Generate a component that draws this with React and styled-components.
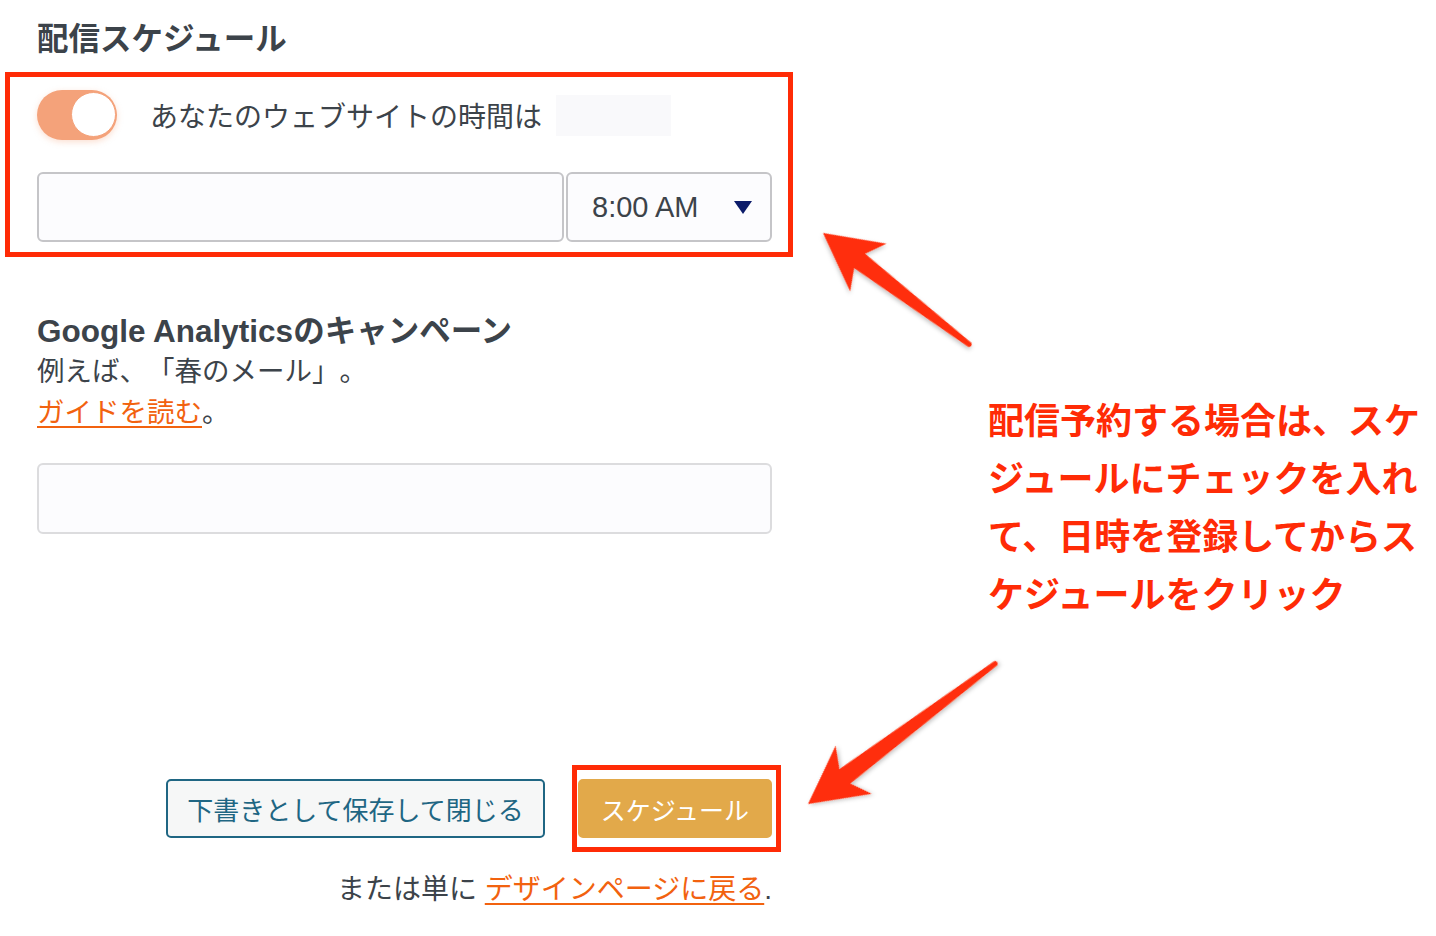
import React from "react";
import styled, { createGlobalStyle } from "styled-components";

const GlobalStyle = createGlobalStyle`
  body {
    margin: 0;
    background: #fff;
    font-family: "Liberation Sans", "Noto Sans CJK JP", sans-serif;
    color: #3c434a;
    text-spacing-trim: space-all;
  }
`;

const Page = styled.div`
  position: relative;
  width: 1436px;
  height: 936px;
  display: flex;
  overflow: hidden;
`;

const FormColumn = styled.div`
  width: 735px;
  margin-left: 37px;
  padding-top: 19px;
  display: flex;
  flex-direction: column;
`;

const SectionTitle = styled.h2`
  margin: 0;
  font-size: 31.5px;
  line-height: 40px;
  font-weight: 700;
  color: #3c434a;
  white-space: nowrap;
`;

const Highlight = styled.div`
  border: 5px solid #ff2b06;
  margin: ${(p) => p.$margin};
  padding: ${(p) => p.$padding};
`;

const ToggleRow = styled.div`
  display: flex;
  align-items: center;
  height: 50px;
`;

const Toggle = styled.span`
  position: relative;
  width: 80px;
  height: 50px;
  border-radius: 25px;
  background: #f4a27a;
  box-shadow: 0 2px 6px rgba(244, 162, 122, 0.35);
  flex-shrink: 0;

  &::after {
    content: "";
    position: absolute;
    right: 1px;
    top: 2px;
    width: 43px;
    height: 43px;
    border-radius: 50%;
    background: #fff;
    border: 1.5px solid #f4a27a;
  }
`;

const ToggleLabel = styled.span`
  margin-left: 33px;
  font-size: 28px;
  color: #3c434a;
  white-space: nowrap;
`;

const FaintBox = styled.span`
  width: 115px;
  height: 41px;
  margin-left: 14px;
  background: #f9f9fb;
`;

const DateRow = styled.div`
  display: flex;
  gap: 2px;
  margin-top: 32px;
`;

const Field = styled.div`
  box-sizing: border-box;
  height: ${(p) => p.$h || 70}px;
  flex: ${(p) => p.$flex || "1"};
  width: ${(p) => (p.$w ? p.$w + "px" : "auto")};
  border: 2px solid ${(p) => p.$border || "#c5c5c8"};
  border-radius: 6px;
  background: #fcfcfe;
  display: flex;
  align-items: center;
  justify-content: space-between;
  padding: 0 18px 0 24px;
  margin-top: ${(p) => p.$mt || 0}px;
`;

const SelectText = styled.span`
  font-size: 29px;
  color: #3c434a;
`;

const Caret = styled.span`
  width: 0;
  height: 0;
  border-left: 9px solid transparent;
  border-right: 9px solid transparent;
  border-top: 13px solid #0b1b6a;
`;

const Heading = styled.h3`
  margin: 54px 0 0;
  font-size: 31.5px;
  line-height: 40px;
  font-weight: 700;
  color: #3c434a;
  white-space: nowrap;
`;

const Desc = styled.p`
  margin: 0;
  font-size: 27.5px;
  line-height: 41px;
  color: #3c434a;
  white-space: nowrap;
`;

const Link = styled.a`
  color: #f2620f;
  text-decoration: underline;
  text-decoration-thickness: 2px;
  text-underline-offset: 4px;
`;

const ButtonRow = styled.div`
  display: flex;
  align-items: center;
  justify-content: flex-end;
  margin-top: 231px;
  margin-right: -9px;
  gap: 27px;
`;

const Button = styled.button`
  box-sizing: border-box;
  height: 59px;
  padding: 0 ${(p) => (p.$primary ? 21 : 19)}px;
  border-radius: 5px;
  font-family: "Liberation Sans", "Noto Sans CJK JP", sans-serif;
  font-size: ${(p) => (p.$primary ? 25 : 26)}px;
  border: 2px solid ${(p) => (p.$primary ? "#e2a94a" : "#1f6683")};
  background: ${(p) => (p.$primary ? "#e2a94a" : "#f6f7f7")};
  color: ${(p) => (p.$primary ? "#fff" : "#1f6683")};
  white-space: nowrap;
`;

const Footer = styled.p`
  margin: 18px 0 0;
  font-size: 28px;
  line-height: 40px;
  text-align: right;
  color: #3c434a;
  white-space: nowrap;
`;

const Note = styled.div`
  margin-left: 216px;
  padding-top: 389px;
  font-size: 36px;
  line-height: 58px;
  font-weight: 700;
  color: #ff2b06;
  white-space: nowrap;
  font-family: "Noto Sans CJK JP", sans-serif;
`;

const Overlay = styled.svg`
  position: absolute;
  inset: 0;
  pointer-events: none;
`;

const Arrow = ({ tip, tail }) => {
  const dx = tail[0] - tip[0];
  const dy = tail[1] - tip[1];
  const L = Math.hypot(dx, dy);
  const angle = (Math.atan2(dy, dx) * 180) / Math.PI;
  return (
    <g transform={`translate(${tip[0]} ${tip[1]}) rotate(${angle})`} filter="url(#shadow)">
      <path
        d={`M0 0 L57 -30 L46 -9 L${L} -2.5 Q${L + 3} 0 ${L} 2.5 L46 9 L57 30 Z`}
        fill="#ff2d0a"
      />
    </g>
  );
};

export default function App() {
  return (
    <>
      <GlobalStyle />
      <Page>
        <FormColumn>
          <SectionTitle>配信スケジュール</SectionTitle>
          <Highlight $margin="13px -21px 0 -32px" $padding="13px 16px 10px 27px">
            <ToggleRow>
              <Toggle />
              <ToggleLabel>あなたのウェブサイトの時間は</ToggleLabel>
              <FaintBox />
            </ToggleRow>
            <DateRow>
              <Field />
              <Field $flex="none" $w={206}>
                <SelectText>8:00 AM</SelectText>
                <Caret />
              </Field>
            </DateRow>
          </Highlight>

          <Heading>Google Analyticsのキャンペーン</Heading>
          <Desc>例えば、「春のメール」。</Desc>
          <Desc>
            <Link>ガイドを読む</Link>。
          </Desc>
          <Field $flex="none" $h={71} $mt={30} $border="#dcdcde" />

          <ButtonRow>
            <Button>下書きとして保存して閉じる</Button>
            <Highlight $margin="0" $padding="9px 4px 9px 1px">
              <Button $primary>スケジュール</Button>
            </Highlight>
          </ButtonRow>
          <Footer>
            または単に <Link>デザインページに戻る</Link>.
          </Footer>
        </FormColumn>

        <Note>
          配信予約する場合は、スケ
          <br />
          ジュールにチェックを入れ
          <br />
          て、日時を登録してからス
          <br />
          ケジュールをクリック
        </Note>

        <Overlay width="1436" height="936">
          <defs>
            <filter id="shadow" x="-20%" y="-20%" width="140%" height="140%">
              <feDropShadow dx="1" dy="2" stdDeviation="2" floodColor="#000" floodOpacity="0.25" />
            </filter>
          </defs>
          <Arrow tip={[823, 233]} tail={[970, 345]} />
          <Arrow tip={[808, 804]} tail={[996, 663]} />
        </Overlay>
      </Page>
    </>
  );
}
